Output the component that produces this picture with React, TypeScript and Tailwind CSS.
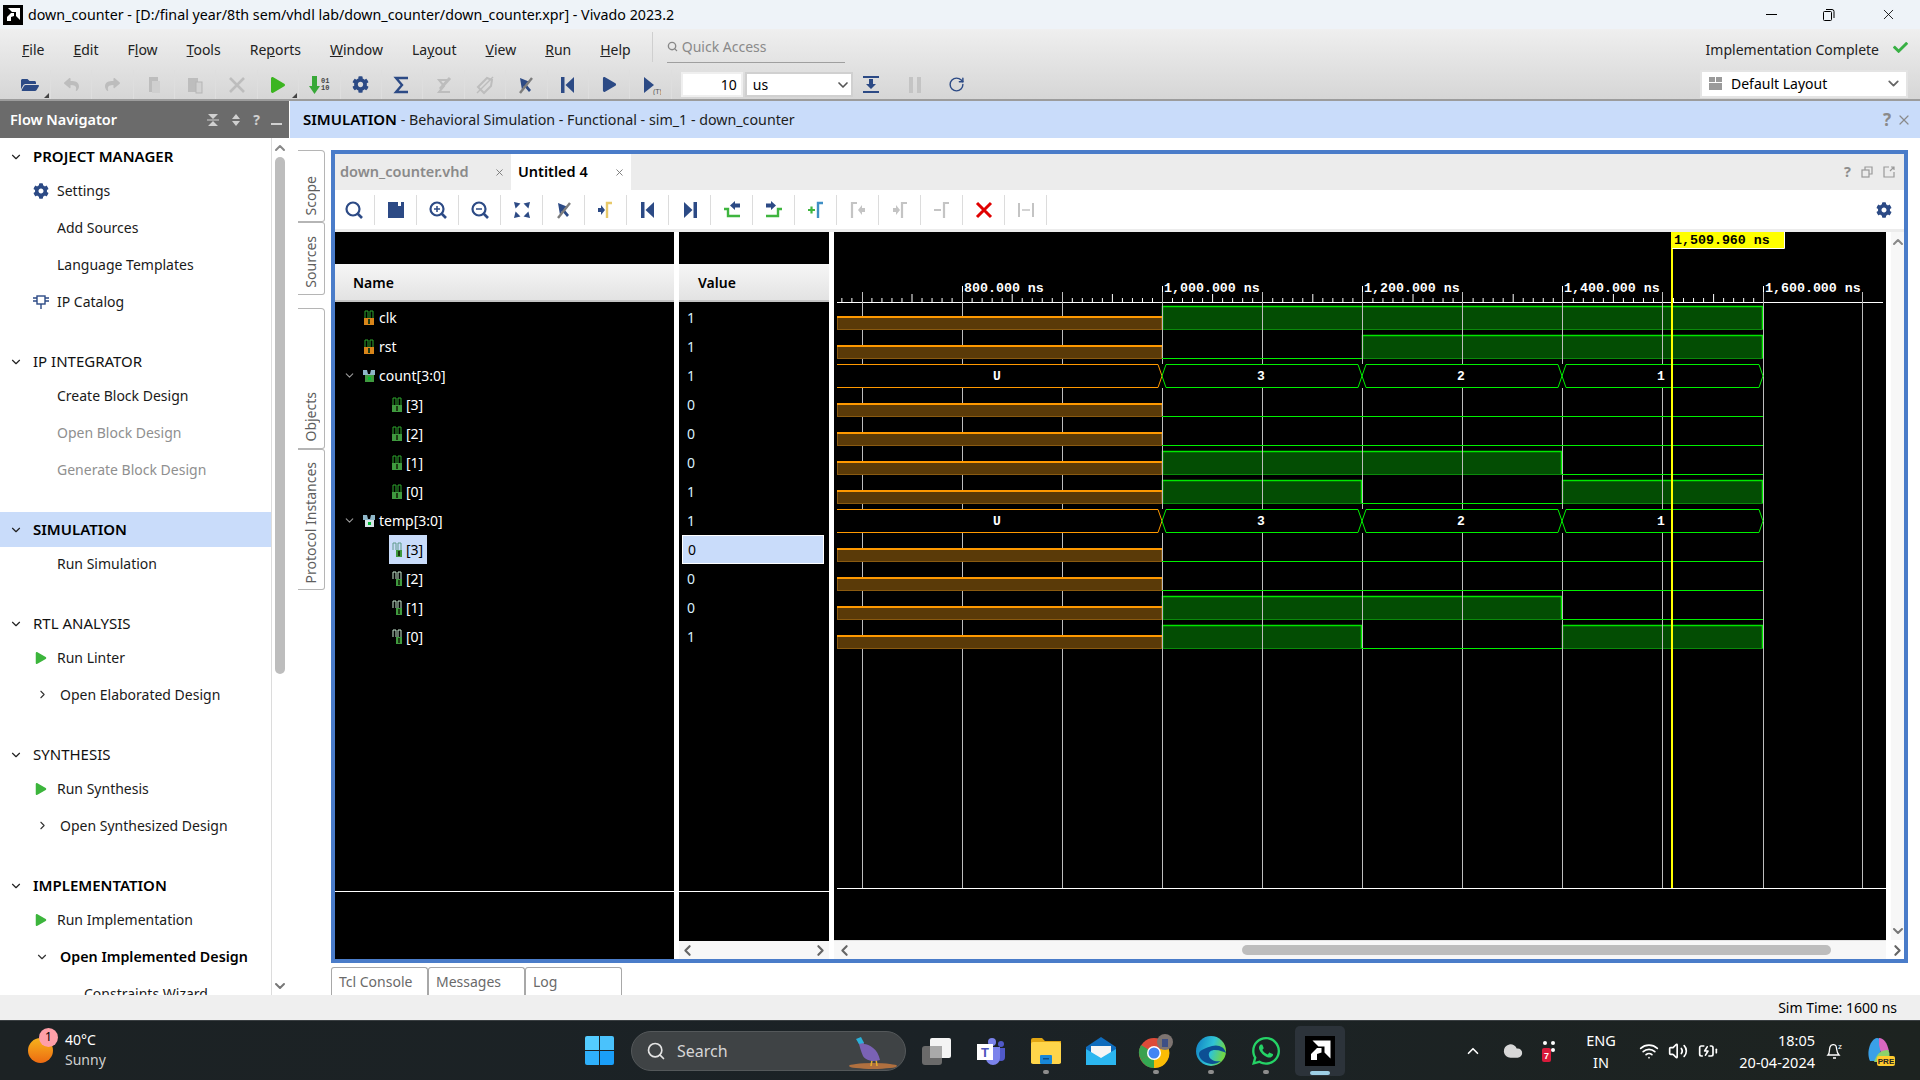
import type { ReactNode } from "react";
import { FaCog, FaFolderOpen, FaReply, FaShare, FaWhatsapp, FaPlay, FaCheck } from "react-icons/fa";
import { ChevronDown, ChevronUp, ChevronLeft, ChevronRight, Search, X, RotateCw, Wifi, Volume2, BatteryCharging, Cloud } from "lucide-react";

const NAVY = "#2c4a85";
const OFF = "#bdbdbd";

// small helper for the hand drawn toolbar icons
const Ico = ({ children, size = 20 }: { children: ReactNode; size?: number }) => (
  <svg width={size} height={size} viewBox="0 0 20 20" fill="none">
    {children}
  </svg>
);

const Corner = () => <span className="absolute right-[1px] bottom-[1px] w-0 h-0 border-l-[5px] border-l-transparent border-b-[5px] border-b-[#444]" />;

const Gear = ({ size = 17 }: { size?: number }) => <FaCog size={size} color={NAVY} />;

const CopyIcon = () => (
  <Ico>
    <rect x="5" y="2" width="9" height="15" fill={OFF} />
    <rect x="8" y="6" width="8" height="12" fill="#cfcfcf" />
  </Ico>
);
const PasteIcon = () => (
  <Ico>
    <rect x="3" y="3" width="10" height="14" fill={OFF} />
    <rect x="11" y="7" width="6" height="11" fill="#d2d2d2" stroke="#b5b5b5" />
  </Ico>
);
const Cross = ({ color = OFF, w = 2.6 }: { color?: string; w?: number }) => (
  <Ico>
    <path d="M3 3L17 17M17 3L3 17" stroke={color} strokeWidth={w} />
  </Ico>
);
const Bits = () => (
  <svg width="24" height="20" viewBox="0 0 24 20">
    <path d="M5 1h5v10h3l-5.500 8-5.500-8h3z" fill="#38a838" />
    <text x="14" y="8" fontSize="7" fontFamily="Liberation Mono, monospace" fontWeight="700" fill="#444">01</text>
    <text x="14" y="15" fontSize="7" fontFamily="Liberation Mono, monospace" fontWeight="700" fill="#444">10</text>
  </svg>
);
const Sigma = ({ color = NAVY }: { color?: string }) => (
  <Ico>
    <path d="M16 3H4l6 7-6 7h12" stroke={color} strokeWidth="2.4" />
  </Ico>
);
const SigmaOff = () => (
  <Ico>
    <path d="M15 5H5l5 6-5 6h11" stroke={OFF} strokeWidth="2" />
    <path d="M6 14L16 3" stroke={OFF} strokeWidth="3" />
  </Ico>
);
const TagOff = () => (
  <Ico>
    <path d="M3 12L12 3l5 2-1 6-7 7z" stroke={OFF} strokeWidth="2" />
    <path d="M2 18L18 2" stroke={OFF} strokeWidth="1.500" />
  </Ico>
);
const Cut = () => (
  <Ico>
    <path d="M4 3l10 4-4 2 5 6-2 2-5-6-2 4z" fill={NAVY} />
    <path d="M4 18L16 3" stroke="#7d7d7d" strokeWidth="2.400" />
  </Ico>
);
const SkipBack = () => (
  <Ico>
    <rect x="3" y="2" width="3.500" height="16" fill={NAVY} />
    <path d="M16 2v16L7.500 10z" fill={NAVY} />
  </Ico>
);
const SkipForward = () => (
  <Ico>
    <rect x="13.500" y="2" width="3.500" height="16" fill={NAVY} />
    <path d="M4 2v16l8.500-8z" fill={NAVY} />
  </Ico>
);
const Step = () => (
  <Ico>
    <path d="M3 2l10 8-10 8z" fill={NAVY} />
    <text x="12" y="19" fontSize="7" fill="#555" fontFamily="Liberation Sans, sans-serif">(T)</text>
  </Ico>
);
const Floppy = () => (
  <Ico>
    <path d="M2 2h16v16H2z" fill={NAVY} />
    <rect x="12" y="2" width="3" height="4" fill="#fff" />
  </Ico>
);
const Lens = ({ mark }: { mark?: "plus" | "minus" }) => (
  <Ico>
    <circle cx="9" cy="9" r="6.500" stroke={NAVY} strokeWidth="2.200" />
    <path d="M13.500 13.500L18 18" stroke={NAVY} strokeWidth="2.600" />
    {mark && <path d="M6 9h6" stroke={NAVY} strokeWidth="1.500" />}
    {mark === "plus" && <path d="M9 6v6" stroke={NAVY} strokeWidth="1.500" />}
  </Ico>
);
const Fit = () => (
  <Ico>
    <path d="M3 3l4 1-3 3zM17 3l-4 1 3 3zM3 17l4-1-3-3zM17 17l-4-1 3-3z" fill={NAVY} stroke={NAVY} strokeWidth="1.500" />
  </Ico>
);
const Marker = ({ bar, arrow }: { bar: string; arrow: string }) => (
  <Ico>
    <path d="M11 18V3h5" stroke={bar} strokeWidth="2.400" />
    <path d="M2 8h3V5l4 5-4 5v-3H2z" fill={arrow} />
  </Ico>
);
const Edge = ({ dir }: { dir: "prev" | "next" }) => (
  <Ico>
    {dir === "prev" ? (
      <>
        <path d="M2 9h4v7h12" stroke="#3fb53f" strokeWidth="2.400" />
        <path d="M18 3.500v4h-5V10L8 5.500 13 1v2.500z" fill={NAVY} />
      </>
    ) : (
      <>
        <path d="M2 16h12V9h4" stroke="#3fb53f" strokeWidth="2.400" />
        <path d="M2 3.500v4h5V10l5-4.500L7 1v2.500z" fill={NAVY} />
      </>
    )}
  </Ico>
);
const AddMarker = () => (
  <Ico>
    <path d="M12 18V3h5" stroke="#3f8fc5" strokeWidth="2.400" />
    <path d="M2 10h7M5.500 6.500v7" stroke="#3fb53f" strokeWidth="2.200" />
  </Ico>
);
const MarkerOff = ({ flip }: { flip?: boolean }) => (
  <Ico>
    <path d={flip ? "M12 18V3h5" : "M4 18V3h5"} stroke="#c4c4c4" strokeWidth="2.200" />
    <path d={flip ? "M3 8h3V5l4 5-4 5v-3H3z" : "M17 8h-3V5l-4 5 4 5v-3h3z"} fill="#c4c4c4" />
  </Ico>
);
const MinusMarker = () => (
  <Ico>
    <path d="M12 18V3h5M2 10h7" stroke="#c4c4c4" strokeWidth="2.200" />
  </Ico>
);
const Measure = () => (
  <Ico>
    <path d="M3 3v14M17 3v14" stroke="#c4c4c4" strokeWidth="2" />
    <path d="M6 10h8" stroke="#c4c4c4" strokeWidth="1.500" />
  </Ico>
);

const MENU: [string, string, string][] = [
  ["", "F", "ile"],
  ["", "E", "dit"],
  ["F", "l", "ow"],
  ["", "T", "ools"],
  ["Re", "p", "orts"],
  ["", "W", "indow"],
  ["La", "y", "out"],
  ["", "V", "iew"],
  ["", "R", "un"],
  ["", "H", "elp"],
];

const NAV: { title: string; items: { label: string; icon?: string; state?: string }[] }[] = [
  {
    title: "PROJECT MANAGER",
    items: [{ label: "Settings", icon: "gear" }, { label: "Add Sources" }, { label: "Language Templates" }, { label: "IP Catalog", icon: "ip" }],
  },
  { title: "IP INTEGRATOR", items: [{ label: "Create Block Design" }, { label: "Open Block Design", state: "off" }, { label: "Generate Block Design", state: "off" }] },
  { title: "SIMULATION", items: [{ label: "Run Simulation" }] },
  { title: "RTL ANALYSIS", items: [{ label: "Run Linter", icon: "play" }, { label: "Open Elaborated Design", state: "open" }] },
  { title: "SYNTHESIS", items: [{ label: "Run Synthesis", icon: "play" }, { label: "Open Synthesized Design", state: "open" }] },
  {
    title: "IMPLEMENTATION",
    items: [{ label: "Run Implementation", icon: "play" }, { label: "Open Implemented Design", state: "expanded" }, { label: "Constraints Wizard", state: "sub" }],
  },
];

const FlowNavigator = () => (
  <div className="w-[289px] shrink-0 flex flex-col bg-white overflow-hidden">
    <div className="h-[37px] shrink-0 bg-[#6b6b6b] flex items-center pl-[10px] text-white font-semibold text-[14.5px]">
      <span>Flow Navigator</span>
      <span className="ml-auto flex items-center gap-[11px] pr-[7px] text-[#d0d0d0]">
        <svg width="12" height="12" viewBox="0 0 12 12" fill="#d0d0d0"><path d="M1 0h10L6 5zM1 12h10L6 7z" /><rect x="0" y="5.500" width="12" height="1" /></svg>
        <svg width="12" height="12" viewBox="0 0 12 12" fill="#d0d0d0"><path d="M2 5h8L6 0zM2 7h8l-4 5z" /></svg>
        <span className="font-bold text-[14px] leading-none">?</span>
        <span className="w-[11px] h-[2px] mt-[9px] bg-[#d0d0d0]" />
      </span>
    </div>
    <div className="flex-1 flex min-h-0">
      <div className="w-[271px] shrink-0 overflow-hidden pt-[1px]">
        {NAV.map((sec) => (
          <div key={sec.title} className="mb-[24px]">
            <div className={`h-[35px] flex items-center pl-[9px] text-[15px] ${sec.title === "SIMULATION" ? "bg-[#c9dcfa]" : ""} ${sec.title === "PROJECT MANAGER" || sec.title === "SIMULATION" || sec.title === "IMPLEMENTATION" ? "font-semibold text-black" : "text-[#111]"}`}>
              <ChevronDown size={14} strokeWidth={2} className="mr-[10px]" color="#222" />
              {sec.title}
            </div>
            <div className="-mt-[2px]">
              {sec.items.map((it) => (
                <div key={it.label} className="h-[37px] flex items-center text-[14px] text-[#1a1a1a] relative">
                  {it.icon === "gear" && <span className="absolute left-[33px]"><Gear size={16} /></span>}
                  {it.icon === "play" && <span className="absolute left-[35px]"><FaPlay size={12} color="#3cb53c" /></span>}
                  {it.icon === "ip" && (
                    <span className="absolute left-[33px]">
                      <svg width="16" height="16" viewBox="0 0 16 16" fill="none" stroke={NAVY} strokeWidth="1.400"><rect x="4" y="2" width="8" height="8" /><path d="M8 10v5M0 4h4M0 7h4M12 4h4M12 7h4" /></svg>
                    </span>
                  )}
                  {it.state === "open" && <ChevronRight size={13} className="absolute left-[36px]" color="#333" />}
                  {it.state === "expanded" && <ChevronDown size={14} className="absolute left-[35px]" color="#333" />}
                  <span className={
                    it.state === "off" ? "ml-[57px] text-[#8f8f8f]"
                      : it.state === "open" ? "ml-[60px]"
                      : it.state === "expanded" ? "ml-[60px] font-semibold text-black text-[14.3px]"
                      : it.state === "sub" ? "ml-[84px]"
                      : "ml-[57px]"
                  }>{it.label}</span>
                </div>
              ))}
            </div>
          </div>
        ))}
      </div>
      <div className="w-[18px] shrink-0 border-l border-[#dcdcdc] flex flex-col items-center pt-[2px] relative">
        <ChevronUp size={16} strokeWidth={3} color="#888" className="-ml-[2px]" />
        <div className="w-[10px] h-[517px] mt-[1px] -ml-[2px] rounded-[5px] bg-[#bdbdbd]" />
        <ChevronDown size={16} strokeWidth={3} color="#777" className="mt-auto mb-[1px] -ml-[2px]" />
      </div>
    </div>
  </div>
);

const SideTab = ({ label, h, first }: { label: string; h: string; first?: boolean }) => (
  <div className={`${h} w-[27px] bg-white border border-l-0 ${first ? "rounded-tr-[4px]" : ""} border-[#b5b5b5] rounded-r-[3px] flex items-end justify-center pb-[6px]`}>
    <span className="[writing-mode:vertical-rl] rotate-180 text-[14px] leading-none text-[#5e5e5e]">{label}</span>
  </div>
);

type SigKind = "in" | "bit" | "bus" | "tmp" | "tmpbus";

const SignalIcon = ({ kind, sel }: { kind: SigKind; sel?: boolean }) => {
  if (kind === "bus" || kind === "tmpbus")
    return (
      <svg width="14" height="14" viewBox="0 0 14 14">
        <path d="M1 1h4l1 4h2l1-4h4v5H9l-2 2-2-2H1z" fill="#8fb7c9" />
        <rect x="3" y="6" width="9" height="7" fill={kind === "bus" ? "#3f9a3f" : "#d8e4e8"} />
        <rect x="6" y="8" width="3" height="3" fill="#0b3" />
      </svg>
    );
  const box = kind === "in" ? "#d9851a" : "#3f9a3f";
  const wave = kind === "tmp" ? (sel ? "#5f9a8a" : "#c8e8d0") : "#2fa82f";
  return (
    <svg width="12" height="16" viewBox="0 0 12 16" fill="none">
      <path d="M2 8V1h3v7M7 8V1h3v7" stroke={wave} strokeWidth="1" />
      <rect x={kind === "tmp" ? 5 : 1} y="8" width={kind === "tmp" ? 6 : 10} height="7" fill={box} />
      <rect x={kind === "tmp" ? 7 : 5} y="9" width="2" height="5" fill="#1d3a12" />
    </svg>
  );
};

const SIGNALS: { name: string; value: string; kind: SigKind; child?: boolean; selected?: boolean }[] = [
  { name: "clk", value: "1", kind: "in" },
  { name: "rst", value: "1", kind: "in" },
  { name: "count[3:0]", value: "1", kind: "bus" },
  { name: "[3]", value: "0", kind: "bit", child: true },
  { name: "[2]", value: "0", kind: "bit", child: true },
  { name: "[1]", value: "0", kind: "bit", child: true },
  { name: "[0]", value: "1", kind: "bit", child: true },
  { name: "temp[3:0]", value: "1", kind: "tmpbus" },
  { name: "[3]", value: "0", kind: "tmp", child: true, selected: true },
  { name: "[2]", value: "0", kind: "tmp", child: true },
  { name: "[1]", value: "0", kind: "tmp", child: true },
  { name: "[0]", value: "1", kind: "tmp", child: true },
];

const ColHeader = ({ label, pl }: { label: string; pl: string }) => (
  <div className={`h-[38px] shrink-0 flex items-center ${pl} bg-linear-to-b from-[#f6f6f6] to-[#e3e3e3] border-b-2 border-[#c4c4c4] font-semibold text-[14px] text-black`}>
    {label}
  </div>
);

const NameColumn = () => (
  <div className="w-[339px] shrink-0 bg-black flex flex-col">
    <div className="h-[32px] shrink-0" />
    <ColHeader label="Name" pl="pl-[18px]" />
    <div className="flex-1 pt-[1px]">
      {SIGNALS.map((s, i) => (
        <div key={i} className="h-[29px] flex items-center text-[14px] text-white">
          {s.child ? (
            s.selected ? (
              <div className="ml-[54px] h-[29px] w-[38px] flex items-center gap-[3px] pl-[2px] bg-[#c9dcfa] text-black">
                <SignalIcon kind={s.kind} sel />
                <span>{s.name}</span>
              </div>
            ) : (
              <div className="ml-[56px] flex items-center gap-[3px]">
                <SignalIcon kind={s.kind} />
                <span>{s.name}</span>
              </div>
            )
          ) : (
            <div className="ml-[8px] flex items-center">
              <span className="w-[19px]">{(s.kind === "bus" || s.kind === "tmpbus") && <ChevronDown size={13} color="#9a9a9a" />}</span>
              <span className="w-[14px] flex justify-center"><SignalIcon kind={s.kind} /></span>
              <span className="ml-[3px]">{s.name}</span>
            </div>
          )}
        </div>
      ))}
    </div>
    <div className="h-[68px] shrink-0 border-t border-white" />
  </div>
);

const ValueColumn = () => (
  <div className="w-[150px] shrink-0 flex flex-col">
    <div className="flex-1 bg-black flex flex-col">
      <div className="h-[32px] shrink-0" />
      <ColHeader label="Value" pl="pl-[19px]" />
      <div className="flex-1 pt-[1px]">
        {SIGNALS.map((s, i) => (
          <div key={i} className="h-[29px] flex items-center text-[14px]">
            {s.selected ? (
              <div className="ml-[3px] h-[29px] w-[142px] flex items-center pl-[5px] bg-[#c9dcfa] border border-white text-black">{s.value}</div>
            ) : (
              <span className="ml-[8px] text-[#d8f0ff]">{s.value}</span>
            )}
          </div>
        ))}
      </div>
      <div className="h-[50px] shrink-0 border-t border-white" />
    </div>
    <div className="h-[18px] shrink-0 bg-[#f7f7f7] flex items-center justify-between">
      <ChevronLeft size={17} strokeWidth={3} color="#666" />
      <ChevronRight size={17} strokeWidth={3} color="#666" />
    </div>
  </div>
);

// waveform pane, coordinates are relative to the pane
const rowTop = (i: number) => 74 + 29 * i;
const T1000 = 328;
const T1200 = 528;
const T1400 = 728;
const T1600 = 929;
const START = 3;

const High = ({ i, a, b }: { i: number; a: number; b: number }) => (
  <g>
    <rect x={a} y={rowTop(i)} width={b - a} height={23} fill="#034d03" />
    <path d={`M${a} ${rowTop(i) + 23.5}H${b}`} stroke="#0a8a0a" />
    <path d={`M${a + 0.5} ${rowTop(i) + 23}V${rowTop(i) + 0.5}H${b - 0.5}V${rowTop(i) + 23}`} stroke="#00e800" fill="none" strokeWidth="1.500" />
  </g>
);
const Low = ({ i, a, b }: { i: number; a: number; b: number }) => <path d={`M${a} ${rowTop(i) + 23.5}H${b}`} stroke="#00f000" />;
const Unknown = ({ i }: { i: number }) => (
  <g>
    <rect x={START + 0.5} y={rowTop(i) + 11.5} width={T1000 - START - 1} height={12} fill="#5a3a08" stroke="#8a5a10" />
    <path d={`M${START} ${rowTop(i) + 11}H${T1000}`} stroke="#ff9900" strokeWidth="2" />
  </g>
);
const Bus = ({ i }: { i: number }) => {
  const t = rowTop(i) + 0.5;
  const b = rowTop(i) + 23.5;
  const m = rowTop(i) + 12;
  const seg = (a: number, z: number) => (
    <path d={`M${a} ${m}L${a + 4} ${t}H${z - 4}L${z} ${m}L${z - 4} ${b}H${a + 4}Z`} stroke="#00f000" fill="none" />
  );
  const lab = (x: number, s: string) => (
    <text x={x} y={m + 4} textAnchor="middle" fill="#fff" fontSize="13" fontWeight="700" fontFamily="Liberation Mono, monospace">{s}</text>
  );
  return (
    <g>
      <rect x={START} y={rowTop(i)} width={T1600 - START} height={24} fill="#000" />
      <path d={`M${START} ${t}H${T1000 - 4}L${T1000} ${m}L${T1000 - 4} ${b}H${START}`} stroke="#ff9900" fill="none" />
      {lab(163, "U")}
      {seg(T1000, T1200)}
      {seg(T1200, T1400)}
      {seg(T1400, T1600)}
      {lab(427, "3")}
      {lab(627, "2")}
      {lab(827, "1")}
    </g>
  );
};

const ticks: ReactNode[] = [];
for (let k = -32; k <= 60; k++) {
  const x = T1000 + k * 10.02 + 0.5;
  if (x < 3 || x > 1049) continue;
  const h = k % 10 === 0 ? 0 : k % 5 === 0 ? 8 : 4;
  if (h) ticks.push(<path key={k} d={`M${x} 70V${70 - h}`} stroke="#fff" />);
}

// high parts go under the grid, orange parts and low lines on top of it
const BitsHigh = ({ base }: { base: number }) => (
  <g>
    <High i={base + 2} a={T1000} b={T1400} />
    <High i={base + 3} a={T1000} b={T1200} />
    <High i={base + 3} a={T1400} b={T1600} />
  </g>
);
const BitsRest = ({ base }: { base: number }) => (
  <g>
    {[0, 1, 2, 3].map((n) => <Unknown key={n} i={base + n} />)}
    <Low i={base} a={T1000} b={T1600} />
    <Low i={base + 1} a={T1000} b={T1600} />
    <Low i={base + 2} a={T1400} b={T1600} />
    <Low i={base + 3} a={T1200} b={T1400} />
  </g>
);

const WaveCanvas = () => (
  <svg width="1052" height="708" viewBox="0 0 1052 708" className="block bg-black">
    {[
      [800, 128],
      [1000, T1000],
      [1200, T1200],
      [1400, T1400],
      [1600, T1600],
    ].map(([t, x]) => (
      <g key={t}>
        <path d={`M${x + 0.5} 54V70`} stroke="#fff" />
        <text x={x + 2} y={60} fill="#fff" fontSize="13.300" fontWeight="700" fontFamily="Liberation Mono, monospace">
          {t === 800 ? "800.000 ns" : `${String(t).charAt(0)},${String(t).slice(1)}.000 ns`}
        </text>
      </g>
    ))}
    <path d="M3 70.500H1049" stroke="#fff" />
    {ticks}

    <High i={0} a={T1000} b={T1600} />
    <High i={1} a={T1200} b={T1600} />
    <BitsHigh base={3} />
    <BitsHigh base={8} />

    {[28, 128, 228, T1000, 428, T1200, 628, T1400, 828, T1600, 1028].map((x) => (
      <path key={x} d={`M${x + 0.5} 60V656`} stroke="#bdbdbd" />
    ))}

    <Unknown i={0} />
    <Unknown i={1} />
    <Low i={1} a={T1000} b={T1200} />
    <Bus i={2} />
    <BitsRest base={3} />
    <Bus i={7} />
    <BitsRest base={8} />

    <path d="M3 656.500H1052" stroke="#fff" />
    <rect x="837" y="0" width="2" height="656" fill="#ffff00" />
    <rect x="838" y="0" width="112" height="16" fill="#ffff00" />
    <path d="M838 16.500H950.500V0" stroke="#fff" fill="none" />
    <text x="840" y="12" fill="#000" fontSize="13.300" fontWeight="700" fontFamily="Liberation Mono, monospace">1,509.960 ns</text>
  </svg>
);

const WaveColumn = () => (
  <div className="w-[1052px] shrink-0 flex flex-col">
    <WaveCanvas />
    <div className="h-[19px] shrink-0 bg-[#f7f7f7] flex items-center px-[2px] border-t border-[#e2e2e2]">
      <ChevronLeft size={17} strokeWidth={3} color="#666" />
      <div className="ml-[389px] w-[589px] h-[10px] rounded-[5px] bg-[#bdbdbd]" />
    </div>
  </div>
);

const WAVE_TOOLS: ReactNode[] = [
  <Lens />, <Floppy />, <Lens mark="plus" />, <Lens mark="minus" />, <Fit />, <Cut />,
  <Marker bar="#e8c96a" arrow={NAVY} />, <SkipBack />, <SkipForward />, <Edge dir="prev" />, <Edge dir="next" />, <AddMarker />,
  <MarkerOff />, <MarkerOff flip />, <MinusMarker />, <Cross color="#e00000" w={3} />, <Measure />,
];

const SimPanel = () => (
  <div className="w-[1577px] h-[813px] shrink-0 border-4 border-[#4a7cc9] flex flex-col bg-white">
    <div className="h-[36px] shrink-0 bg-[#ececec] flex items-stretch text-[14.5px] font-semibold">
      <div className="w-[176px] flex items-center pl-[5px] text-[#8a8a8a]">
        down_counter.vhd
        <X size={11} className="ml-auto mr-[6px]" color="#777" />
      </div>
      <div className="w-[120px] flex items-center pl-[7px] bg-white text-black">
        Untitled 4
        <X size={11} className="ml-auto mr-[6px]" color="#777" />
      </div>
      <div className="ml-auto flex items-center gap-[10px] pr-[9px] text-[#8e8e8e]">
        <span className="font-bold">?</span>
        <svg width="12" height="12" viewBox="0 0 12 12" fill="none" stroke="#999" strokeWidth="1.200"><rect x="1" y="4" width="7" height="7" /><path d="M4 4V1h7v7H8" /></svg>
        <svg width="12" height="12" viewBox="0 0 12 12" fill="none" stroke="#999" strokeWidth="1.200"><path d="M6 1H1v10h10V6M7 5l4-4M8 1h3v3" /></svg>
      </div>
    </div>
    <div className="h-[39px] shrink-0 flex items-center -ml-[2px]">
      {WAVE_TOOLS.map((t, i) => (
        <div key={i} className="w-[42px] h-[30px] flex items-center justify-center border-r border-[#dcdcdc]">{t}</div>
      ))}
      <span className="ml-auto mr-[12px]"><Gear size={16} /></span>
    </div>
    <div className="h-[3px] shrink-0 bg-[#ececec]" />
    <div className="flex-1 flex gap-[5px] min-h-0">
      <NameColumn />
      <ValueColumn />
      <div className="-mr-[5px]"><WaveColumn /></div>
      <div className="ml-[5px] w-[13px] flex-1 bg-[#f7f7f7] flex flex-col items-center h-[708px] relative">
        <ChevronUp size={16} strokeWidth={3} color="#888" className="mt-[2px]" />
        <ChevronDown size={16} strokeWidth={3} color="#777" className="mt-auto mb-[1px]" />
        <ChevronRight size={17} strokeWidth={3} color="#666" className="absolute top-[710px]" />
      </div>
    </div>
  </div>
);

const TOOLS: ReactNode[] = [
  <span className="relative"><FaFolderOpen size={18} color={NAVY} /></span>,
  <FaReply size={15} color={OFF} />,
  <FaShare size={15} color={OFF} />,
  <CopyIcon />,
  <PasteIcon />,
  <Cross />,
  <FaPlay size={16} color="#3cb521" />,
  <Bits />,
  <Gear />,
  <Sigma />,
  <SigmaOff />,
  <TagOff />,
  <Cut />,
  <SkipBack />,
  <FaPlay size={15} color={NAVY} />,
  <Step />,
];

const TrayDot = () => <span className="absolute bottom-[2px] left-1/2 -ml-[3px] w-[6px] h-[4px] rounded-full bg-[#8d8d8d]" />;

const VivadoLogo = ({ size }: { size: number }) => (
  <svg width={size} height={size} viewBox="0 0 20 20">
    <rect width="20" height="20" fill="#000" />
    <path d="M5 3h12v12l-4-4V7H9zM4 12l4-4h3v3l-3 1v4H4z" fill="#fff" />
  </svg>
);

const TaskIcons: { key: string; node: ReactNode; dot?: boolean }[] = [
  {
    key: "files",
    node: (
      <svg width="32" height="30" viewBox="0 0 32 30">
        <rect x="2" y="10" width="20" height="19" rx="3" fill="#6a6a6a" />
        <rect x="10" y="2" width="21" height="20" rx="2" fill="#f4f4f4" />
        <rect x="10" y="10" width="12" height="12" fill="#a9a9a9" />
      </svg>
    ),
  },
  {
    key: "teams",
    node: (
      <svg width="30" height="28" viewBox="0 0 30 28">
        <circle cx="16" cy="5" r="4" fill="#7b83eb" />
        <circle cx="25" cy="7" r="3" fill="#5059c9" />
        <path d="M21 11h8v9a4 4 0 0 1-8 0z" fill="#5059c9" />
        <path d="M10 10h14v11a7 7 0 0 1-14 0z" fill="#7b83eb" />
        <rect x="1" y="7" width="16" height="16" fill="#fff" />
        <text x="9" y="20" textAnchor="middle" fontSize="13" fontWeight="700" fill="#4b53bc" fontFamily="Liberation Sans, sans-serif">T</text>
      </svg>
    ),
  },
  {
    key: "explorer",
    dot: true,
    node: (
      <svg width="30" height="28" viewBox="0 0 30 28">
        <path d="M0 3a2 2 0 0 1 2-2h9l3 3h16v22H0z" fill="#e2a613" />
        <rect x="0" y="5" width="30" height="22" rx="2" fill="#ffd54a" />
        <rect x="9" y="18" width="12" height="9" rx="1" fill="#1887d8" />
        <rect x="12" y="21" width="6" height="1.500" fill="#0b4f8a" />
      </svg>
    ),
  },
  {
    key: "mail",
    node: (
      <svg width="30" height="28" viewBox="0 0 30 28">
        <path d="M0 10L15 0l15 10v18H0z" fill="#0f6cbd" />
        <path d="M5 9h20v7l-10 6-10-6z" fill="#f5f5f5" />
        <path d="M0 12l15 9 15-9v16H0z" fill="#2bb6f0" />
      </svg>
    ),
  },
  {
    key: "chrome",
    dot: true,
    node: (
      <svg width="36" height="34" viewBox="0 0 36 34">
        <circle cx="16" cy="19" r="15" fill="#dd4b39" />
        <path d="M16 19L3 26a15 15 0 0 0 13 8z" fill="#34a853" />
        <path d="M3 11a15 15 0 0 0 0 15l13-7z" fill="#3ba14f" />
        <path d="M16 19l13-8a15 15 0 0 1-13 23z" fill="#fbbc05" />
        <circle cx="16" cy="19" r="7" fill="#fff" />
        <circle cx="16" cy="19" r="5.500" fill="#4285f4" />
        <circle cx="27" cy="8" r="8" fill="#7d7471" />
        <path d="M24 5h6v8h-6z" fill="#3d4f86" />
      </svg>
    ),
  },
  {
    key: "edge",
    dot: true,
    node: (
      <svg width="32" height="32" viewBox="0 0 32 32">
        <defs>
          <linearGradient id="edgeGrad" x1="0" y1="0" x2="1" y2="0.300">
            <stop offset="0" stopColor="#0f7cc4" />
            <stop offset="0.600" stopColor="#2fc4d6" />
            <stop offset="1" stopColor="#6fd64a" />
          </linearGradient>
        </defs>
        <circle cx="16" cy="16" r="15" fill="url(#edgeGrad)" />
        <path d="M4 20c2 8 14 12 22 6-6 1-11-1-12-5s2-6 6-6c5 0 9 2 11 3-1-6-8-9-14-7S3 15 4 20z" fill="#0c4f94" />
      </svg>
    ),
  },
  { key: "whatsapp", dot: true, node: <FaWhatsapp size={32} color="#25d366" /> },
];

const Taskbar = () => (
  <div className="h-[60px] shrink-0 flex items-center text-white bg-linear-to-r from-[#1c2224] via-[#1b2226] to-[#1d2320] border-t border-[#3a3f42]">
    <div className="w-[585px] shrink-0 flex items-center relative">
      <div className="ml-[28px] w-[25px] h-[25px] rounded-full bg-linear-to-b from-[#f6b21c] to-[#ec6a12]" />
      <span className="absolute left-[39px] -top-[4px] w-[19px] h-[19px] rounded-full bg-[#ff9fa8] text-black text-[12px] flex items-center justify-center">1</span>
      <div className="ml-[12px] -mt-[2px] text-[14px] leading-[20px]">
        <div>40°C</div>
        <div className="text-[#d0d0d0]">Sunny</div>
      </div>
    </div>
    <div className="w-[29px] h-[29px] shrink-0 grid grid-cols-2 gap-[1px]">
      <span className="rounded-tl-[2px] bg-[#54ccff]" />
      <span className="rounded-tr-[2px] bg-[#4ac2fc]" />
      <span className="rounded-bl-[2px] bg-[#2fb0fb]" />
      <span className="rounded-br-[2px] bg-[#1a9ef8]" />
    </div>
    <div className="ml-[17px] w-[275px] h-[40px] shrink-0 rounded-full bg-[#3f4345] border border-[#54585a] flex items-center pl-[14px] text-[16px] text-[#d6d6d6] relative">
      <Search size={20} strokeWidth={2} color="#e4e4e4" />
      <span className="ml-[11px]">Search</span>
      <svg width="52" height="38" viewBox="0 0 52 38" className="absolute right-[8px] top-[1px]">
        <ellipse cx="28" cy="33" rx="24" ry="3" fill="#b0703f" />
        <path d="M27 27l-1 6M31 26l1 7" stroke="#e6b02c" strokeWidth="1.500" />
        <path d="M13 8c3-2 6 0 6 3 5 0 14 5 16 16-6 2-14 1-17-4-2-4-3-9-5-15z" fill="#7a62b4" />
        <path d="M11 6l5-2 3 6-5 1z" fill="#2ab0d8" />
      </svg>
    </div>
    <div className="ml-[2px] flex">
      {TaskIcons.map((t) => (
        <div key={t.key} className="w-[55px] h-[50px] relative flex items-center justify-center">
          {t.node}
          {t.dot && <TrayDot />}
        </div>
      ))}
    </div>
    <div className="ml-[2px] w-[50px] h-[50px] rounded-[5px] bg-[#2c333a] flex items-center justify-center relative">
      <VivadoLogo size={30} />
      <span className="absolute bottom-[1px] left-[15px] w-[20px] h-[4px] rounded-full bg-[#9dd0e6]" />
    </div>
    <div className="ml-auto flex items-center pr-[24px]">
      <ChevronUp size={18} color="#fff" strokeWidth={2.200} />
      <Cloud size={20} fill="#d8d8d8" color="#d8d8d8" className="ml-[21px]" />
      <svg width="20" height="24" viewBox="0 0 20 24" className="ml-[18px]">
        <circle cx="4" cy="4" r="2" fill="#fff" /><circle cx="12" cy="4" r="2" fill="#fff" /><circle cx="12" cy="11" r="2" fill="#fff" />
        <rect x="1" y="9" width="9" height="14" rx="2" fill="#d81b3b" />
        <text x="5.500" y="20" textAnchor="middle" fontSize="9" fill="#fff" fontWeight="700" fontFamily="Liberation Sans, sans-serif">7</text>
      </svg>
      <div className="ml-[23px] text-center text-[14.5px] leading-[22px] w-[34px]">
        <div>ENG</div>
        <div>IN</div>
      </div>
      <Wifi size={20} color="#fff" className="ml-[21px]" />
      <Volume2 size={20} color="#fff" className="ml-[9px]" />
      <BatteryCharging size={20} color="#fff" className="ml-[10px]" />
      <div className="ml-[17px] w-[80px] text-right text-[14.5px] leading-[22px]">
        <div>18:05</div>
        <div>20-04-2024</div>
      </div>
      <svg width="20" height="22" viewBox="0 0 20 22" fill="none" stroke="#fff" strokeWidth="1.300" className="ml-[10px]">
        <path d="M3 15c2-2 1-5 2-8s5-3 6-1c1 2 0 6 3 9zM8 18h3" />
        <text x="13" y="9" fontSize="8" stroke="none" fill="#fff" fontFamily="Liberation Sans, sans-serif">z</text>
      </svg>
      <svg width="32" height="32" viewBox="0 0 32 32" className="ml-[19px]">
        <path d="M6 26C2 18 6 4 13 3c4 0 5 3 6 8l-7 15z" fill="#3aa0e8" />
        <path d="M15 3c5 0 8 5 10 13l-7 6-3-12z" fill="#d867c0" />
        <path d="M10 27c3-8 6-12 14-12 3 4 2 12-7 12z" fill="#8cd26a" />
        <rect x="13" y="21" width="18" height="10" rx="2" fill="#ffcb2e" />
        <text x="22" y="29" textAnchor="middle" fontSize="8" fontWeight="700" fill="#222" fontFamily="Liberation Sans, sans-serif">PRE</text>
      </svg>
    </div>
  </div>
);

export default function App() {
  return (
    <div className="w-[1920px] h-[1080px] flex flex-col overflow-hidden bg-white text-black font-['Noto_Sans',sans-serif]">
      {/* title bar */}
      <div className="h-[29px] shrink-0 bg-[#eef3f8] flex items-center text-[14.25px]">
        <span className="ml-[3px] mr-[5px]"><VivadoLogo size={20} /></span>
        <span>down_counter - [D:/final year/8th sem/vhdl lab/down_counter/down_counter.xpr] - Vivado 2023.2</span>
        <div className="ml-auto flex items-center gap-[45px] pr-[23px]">
          <span className="w-[11px] h-[1px] bg-black" />
          <svg width="13" height="13" viewBox="0 0 13 13" fill="none" stroke="#000"><rect x="1.500" y="3.500" width="8" height="9" rx="1" /><path d="M4 1.500h6a2 2 0 0 1 2 2V10" /></svg>
          <X size={17} strokeWidth={1.200} color="#000" />
        </div>
      </div>

      {/* menu and main toolbar */}
      <div className="shrink-0 bg-linear-to-b from-[#efefef] to-[#d6d6d6] border-b-2 border-[#9c9c9c]">
        <div className="h-[41px] flex items-center text-[14px] text-[#222]">
          <div className="flex gap-[29px] pl-[22px]">
            {MENU.map(([a, b, c]) => (
              <span key={a + b + c}>{a}<span className="underline">{b}</span>{c}</span>
            ))}
          </div>
          <div className="ml-[21px] -mt-[6px] h-[30px] border-l border-[#cfcfcf] pl-[14px]">
            <div className="w-[178px] h-[31px] border-b border-[#9f9f9f] flex items-center text-[#8a8a8a]">
              <Search size={11} strokeWidth={3} color="#888" className="mr-[4px]" />
              Quick Access
            </div>
          </div>
          <span className="ml-auto">Implementation Complete</span>
          <FaCheck size={15} color="#38b044" className="ml-[14px] mr-[12px] -mt-[4px]" />
        </div>
        <div className="h-[29px] flex items-center pl-[9.5px]">
          {TOOLS.map((t, i) => (
            <div key={i} className="w-[41.4px] h-[29px] shrink-0 flex items-center justify-center relative border-r border-[#dedede]">
              {t}
              {(i === 0 || i === 6) && <Corner />}
            </div>
          ))}
          <div className="ml-[9px] w-[62px] h-[25px] bg-white border-2 border-[#efefef] flex items-center justify-end pr-[4px] text-[14px]">10</div>
          <div className="ml-[2px] w-[108px] h-[25px] bg-white border-2 border-[#d0d0d0] flex items-center pl-[6px] text-[14px]">
            us
            <ChevronDown size={16} strokeWidth={2.500} color="#555" className="ml-auto" />
          </div>
          <svg width="18" height="20" viewBox="0 0 18 20" className="ml-[9px]" fill={NAVY}>
            <rect x="1" y="1" width="16" height="2" /><rect x="1" y="16" width="16" height="2" />
            <path d="M7 4h4v5h3l-5 5-5-5h3z" />
          </svg>
          <div className="ml-[29px] flex gap-[4px]">
            <span className="w-[4px] h-[16px] bg-[#c4c4c4]" />
            <span className="w-[4px] h-[16px] bg-[#c4c4c4]" />
          </div>
          <RotateCw size={17} strokeWidth={2} color="#2c4a85" className="ml-[27px]" />
          <div className="ml-auto mr-[12px] -mt-[2px] w-[208px] h-[28px] bg-white border-2 border-[#e4e4e4] flex items-center pl-[7px] text-[14px]">
            <svg width="13" height="13" viewBox="0 0 13 13" fill="#9a9a9a" className="mr-[9px]"><rect x="0" y="0" width="6" height="5" /><rect x="7" y="0" width="6" height="5" /><rect x="0" y="6" width="13" height="7" /></svg>
            Default Layout
            <ChevronDown size={17} strokeWidth={2.500} color="#666" className="ml-auto mr-[4px]" />
          </div>
        </div>
      </div>

      {/* workspace */}
      <div className="flex-1 flex min-h-0 border-b-0">
        <FlowNavigator />
        <div className="w-[1px] shrink-0 bg-white" />
        <div className="flex-1 flex flex-col min-w-0">
          <div className="h-[37px] shrink-0 bg-[#c9dcfa] flex items-center pl-[13px] text-[14.25px] text-[#1c1c1c]">
            <span className="font-semibold text-[15px] text-black">SIMULATION</span>
            <span className="whitespace-pre"> - Behavioral Simulation - Functional - sim_1 - down_counter</span>
            <span className="ml-auto mr-[8px] flex items-center gap-[5px] text-[#8a8a8a]">
              <span className="font-bold text-[17px]">?</span>
              <X size={16} strokeWidth={1.800} />
            </span>
          </div>
          <div className="flex-1 flex min-h-0 pt-[12px]">
            <div className="w-[41px] shrink-0 flex flex-col items-end">
              <div className="mr-[6px] flex flex-col">
                <SideTab label="Scope" h="h-[72px]" first />
                <SideTab label="Sources" h="h-[73px]" />
                <div className="h-[13px]" />
                <SideTab label="Objects" h="h-[141px]" first />
                <SideTab label="Protocol Instances" h="h-[141px]" />
              </div>
            </div>
            <div className="flex flex-col">
              <SimPanel />
              <div className="h-[32px] flex items-end pt-[4px] text-[14px] text-[#6a6a6a]">
                {["Tcl Console", "Messages", "Log"].map((t) => (
                  <div key={t} className="w-[97px] h-[28px] border border-b-0 border-[#a8a8a8] rounded-t-[3px] flex items-center pl-[7px] bg-white">{t}</div>
                ))}
              </div>
            </div>
          </div>
        </div>
      </div>

      {/* status bar */}
      <div className="h-[25px] shrink-0 bg-[#efefef] flex items-center justify-end pr-[23px] text-[14px]">Sim Time: 1600 ns</div>

      <Taskbar />
    </div>
  );
}
